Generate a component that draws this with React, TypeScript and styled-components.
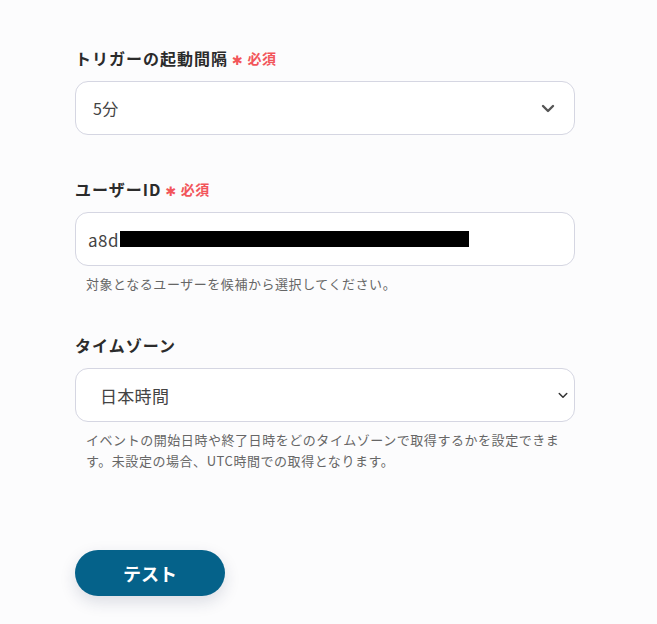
import React from 'react';
import styled, { createGlobalStyle } from 'styled-components';

const GlobalStyle = createGlobalStyle`
  html, body {
    margin: 0;
    padding: 0;
    background: #fcfcfd;
  }
  body {
    font-family: "Noto Sans CJK JP", "Noto Sans", sans-serif;
    color: #333;
  }
`;

const Page = styled.div`
  width: 500px;
  padding: 46px 0 28px 75px;
  display: flex;
  flex-direction: column;
`;

const Field = styled.div`
  display: flex;
  flex-direction: column;
  margin-bottom: 42px;
`;

const Label = styled.div`
  display: flex;
  align-items: center;
  height: 24px;
  font-size: 16px;
  font-weight: 700;
  color: #2b2b2b;
  margin-bottom: 11px;
  letter-spacing: 1px;
`;

const Required = styled.span`
  display: inline-flex;
  align-items: center;
  margin-left: 4px;
  color: #f2555a;
  font-size: 14px;
  font-weight: 700;
  letter-spacing: 0.5px;
  gap: 4px;
`;

const Star = styled.span`
  font-family: "DejaVu Sans", sans-serif;
  font-size: 13px;
  line-height: 1;
  position: relative;
  top: 2px;
`;

const Box = styled.div<{ $padLeft: number; $padRight: number }>`
  height: 54px;
  box-sizing: border-box;
  border: 1px solid #d5d6e2;
  border-radius: 13px;
  background: #fff;
  display: flex;
  align-items: center;
  padding: 0 ${p => p.$padRight}px 0 ${p => p.$padLeft}px;
  color: #444;
`;

const Value = styled.span<{ $size: number }>`
  flex: 1;
  font-size: ${p => p.$size}px;
  display: flex;
  align-items: center;
  letter-spacing: 0.3px;
`;

const IdText = styled.span`
  font-size: 17px;
  letter-spacing: 0.5px;
`;

const Redact = styled.span`
  display: inline-block;
  width: 349px;
  height: 16px;
  background: #000;
  margin-left: 1px;
`;

const Hint = styled.div`
  margin: 7px 0 -3px;
  padding: 0 11px;
  font-size: 13px;
  line-height: 21px;
  letter-spacing: 0.55px;
  color: #666;
`;

const TestButton = styled.button`
  width: 150px;
  height: 46px;
  margin-top: 40px;
  border: none;
  border-radius: 23px;
  background: #05628a;
  color: #fff;
  font-family: "Noto Sans CJK JP", sans-serif;
  font-size: 18px;
  font-weight: 700;
  box-shadow: 0 6px 16px rgba(30, 40, 80, 0.15);
  cursor: pointer;
`;

const Chevron: React.FC<{ size: number; weight: number; color: string }> = ({ size, weight, color }) => (
  <svg width={size} height={size} viewBox="0 0 16 16" fill="none">
    <path d="M3 6 L8 11 L13 6" stroke={color} strokeWidth={weight} strokeLinecap="round" strokeLinejoin="round" />
  </svg>
);

const RequiredMark: React.FC = () => (
  <Required>
    <Star>✱</Star>必須
  </Required>
);

const App: React.FC = () => (
  <>
    <GlobalStyle />
    <Page>
      <Field>
        <Label>
          トリガーの起動間隔
          <RequiredMark />
        </Label>
        <Box $padLeft={17} $padRight={18}>
          <Value $size={16}>5分</Value>
          <Chevron size={16} weight={2.4} color="#555" />
        </Box>
      </Field>

      <Field>
        <Label>
          ユーザーID
          <RequiredMark />
        </Label>
        <Box $padLeft={12} $padRight={18}>
          <Value $size={17}>
            <IdText>a8d</IdText>
            <Redact />
          </Value>
        </Box>
        <Hint>対象となるユーザーを候補から選択してください。</Hint>
      </Field>

      <Field>
        <Label>タイムゾーン</Label>
        <Box $padLeft={24} $padRight={5}>
          <Value $size={17}>日本時間</Value>
          <Chevron size={12} weight={2} color="#333" />
        </Box>
        <Hint>
          イベントの開始日時や終了日時をどのタイムゾーンで取得するかを設定できます。未設定の場合、UTC時間での取得となります。
        </Hint>
      </Field>

      <TestButton>テスト</TestButton>
    </Page>
  </>
);

export default App;
